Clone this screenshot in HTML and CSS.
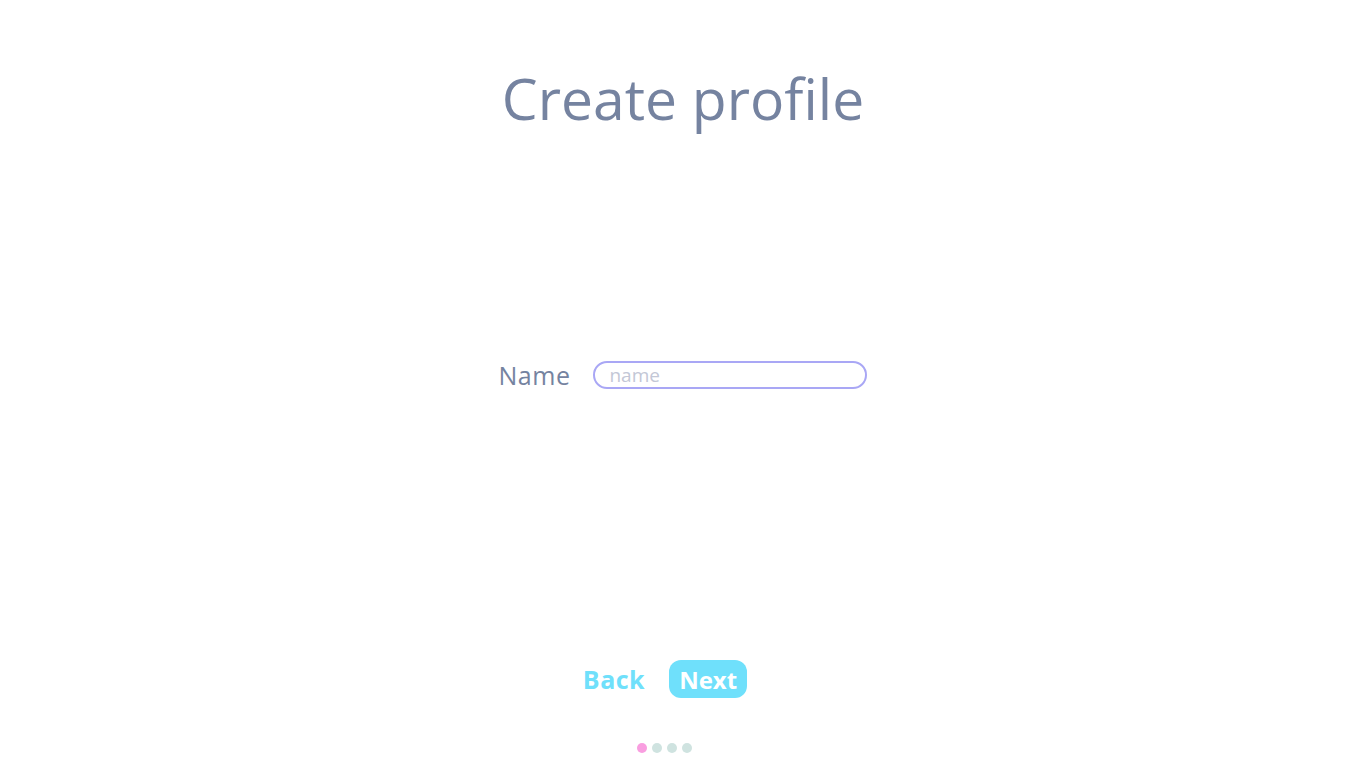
FILE: index.html
```html
<!DOCTYPE html>
<html>
<head>
<meta charset="utf-8">
<link rel="stylesheet" href="styles.css">
</head>
<body>
<div class="page">
  <h1 class="title">Create profile</h1>
  <div class="form">
    <label class="label" for="name">Name</label>
    <input class="input" id="name" type="text" placeholder="name">
  </div>
  <div class="actions">
    <button class="btn back">Back</button>
    <button class="btn next">Next</button>
  </div>
  <div class="dots">
    <span class="dot active"></span>
    <span class="dot"></span>
    <span class="dot"></span>
    <span class="dot"></span>
  </div>
</div>
</body>
</html>
```
FILE: styles.css
```css
html, body {
  margin: 0;
  padding: 0;
  background: #ffffff;
  font-family: "Open Sans", "DejaVu Sans", sans-serif;
}
.page {
  height: 768px;
  display: flex;
  flex-direction: column;
  align-items: center;
}
.title {
  margin: 62px 0 0 0;
  font-size: 57px;
  font-weight: 400;
  color: #7583a0;
  line-height: 72px;
  letter-spacing: 0;
}
.form {
  margin-top: 224px;
  display: flex;
  align-items: center;
  gap: 23px;
}
.label {
  font-size: 25px;
  color: #7583a0;
  letter-spacing: 0.5px;
}
.input {
  box-sizing: border-box;
  width: 274px;
  height: 28px;
  border: 2px solid #a9a7f5;
  border-radius: 14px;
  padding: 0 14px;
  font-family: inherit;
  font-size: 19px;
  color: #7583a0;
  outline: none;
}
.input::placeholder {
  color: #c3c7d6;
}
.actions {
  margin-top: 268px;
  margin-right: 36px;
  display: flex;
  align-items: center;
  gap: 24px;
}
.btn {
  font-family: inherit;
  font-weight: 700;
  font-size: 24px;
  border: none;
  cursor: pointer;
  padding: 0;
  height: 38px;
}
.back {
  background: transparent;
  color: #6fe0fb;
  font-size: 25px;
  letter-spacing: 0.5px;
}
.next {
  background: #6fe0fb;
  color: #ffffff;
  border-radius: 12px;
  width: 78px;
}
.dots {
  margin-top: 45px;
  margin-right: 38px;
  display: flex;
  gap: 5px;
}
.dot {
  width: 10px;
  height: 10px;
  border-radius: 50%;
  background: #cfe3e0;
}
.dot.active {
  background: #f99ee0;
}
```
